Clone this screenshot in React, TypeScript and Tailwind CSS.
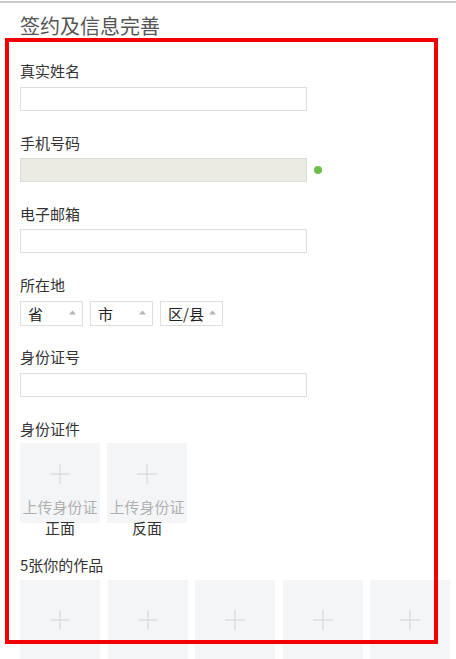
import React from "react";

const font = { fontFamily: '"Noto Sans CJK SC", "Noto Sans", sans-serif' };

function Plus({ size = 22 }: { size?: number }) {
  return (
    <svg width={size} height={size} viewBox="0 0 22 22" className="block shrink-0">
      <line x1="11" y1="0" x2="11" y2="22" stroke="#d6d7da" strokeWidth="1.2" />
      <line x1="0" y1="11" x2="22" y2="11" stroke="#d6d7da" strokeWidth="1.2" />
    </svg>
  );
}

function Label({ children, className = "" }: { children: React.ReactNode; className?: string }) {
  return <div className={`text-[15px] leading-[20px] text-[#333] ${className}`}>{children}</div>;
}

function TextInput({ disabled = false }: { disabled?: boolean }) {
  return (
    <div
      className={`h-[24px] w-[287px] border ${
        disabled ? "border-[#dcdcd6] bg-[#ebebe4]" : "border-[#dedede] bg-white"
      }`}
    />
  );
}

function Select({ text }: { text: string }) {
  return (
    <div className="flex h-[25px] w-[63px] items-center justify-between border border-[#dedede] bg-white pl-[7px] pr-[6px]">
      <span className="text-[15px] leading-[20px] text-[#222]">{text}</span>
      <svg width="7" height="5" viewBox="0 0 7 5" className="mb-[2px]">
        <polygon points="3.5,0.5 7,4.5 0,4.5" fill="#b4b4b4" />
      </svg>
    </div>
  );
}

function IdBox({ side }: { side: string }) {
  return (
    <div className="flex h-[80px] w-[80px] flex-col items-center bg-[#f4f5f7] pt-[21px]">
      <div className="h-[20px] w-[20px] shrink-0">
        <Plus size={20} />
      </div>
      <div className="mt-[12px] shrink-0 whitespace-nowrap text-center text-[15px] leading-[21px]">
        <span className="block text-[#b0b0b0]">上传身份证</span>
        <span className="block text-[#333]">{side}</span>
      </div>
    </div>
  );
}

function WorkBox() {
  return (
    <div className="flex h-[80px] w-[80px] shrink-0 items-center justify-center bg-[#f4f5f7]">
      <Plus size={20} />
    </div>
  );
}

export default function App() {
  return (
    <div className="relative h-[659px] w-[456px] overflow-hidden bg-white" style={font}>
      <div className="mt-px h-[2px] bg-[#c8c8c8]" />
      <div className="pl-5">
        <h1 className="mt-[9px] text-[20px] leading-[28px] text-[#555]">签约及信息完善</h1>

        <Label className="mt-[21px]">真实姓名</Label>
        <div className="mt-[6px]">
          <TextInput />
        </div>

        <Label className="mt-[22px]">手机号码</Label>
        <div className="mt-[5px] flex items-center gap-[7px]">
          <TextInput disabled />
          <div className="h-[8px] w-[8px] rounded-full bg-[#6cbf4e]" />
        </div>

        <Label className="mt-[22px]">电子邮箱</Label>
        <div className="mt-[5px]">
          <TextInput />
        </div>

        <Label className="mt-[22px]">所在地</Label>
        <div className="mt-[6px] flex gap-[7px]">
          <Select text="省" />
          <Select text="市" />
          <Select text="区/县" />
        </div>

        <Label className="mt-[21px]">身份证号</Label>
        <div className="mt-[6px]">
          <TextInput />
        </div>

        <Label className="mt-[22px]">身份证件</Label>
        <div className="mt-[4px] flex gap-[7px]">
          <IdBox side="正面" />
          <IdBox side="反面" />
        </div>

        <Label className="mt-[32px]">5张你的作品</Label>
        <div className="mt-[5px] flex gap-[7.5px]">
          <WorkBox />
          <WorkBox />
          <WorkBox />
          <WorkBox />
          <WorkBox />
        </div>
      </div>

      <div className="pointer-events-none absolute left-[5px] top-[38px] h-[606px] w-[433px] border-[4px] border-[#f50000]" />
    </div>
  );
}
